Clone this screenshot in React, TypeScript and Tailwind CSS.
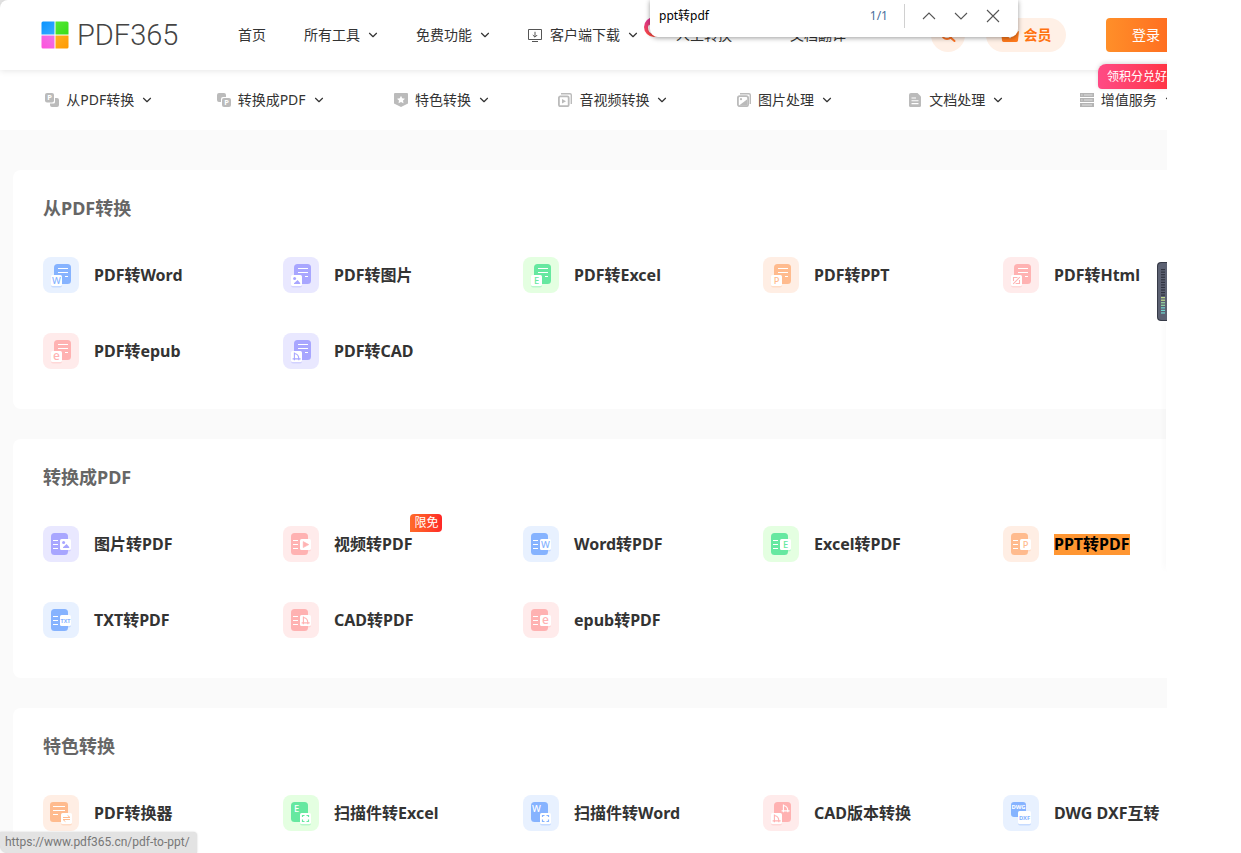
import type { ReactNode } from "react";
import { ChevronDown } from "lucide-react";

type Tone = "blue" | "purple" | "green" | "orange" | "red";
type Layout = "from" | "to" | "swap" | "scan" | "version" | "pair";

interface Tool {
  label: string;
  tone: Tone;
  layout: Layout;
  mark: string;
  tag?: string;
  found?: boolean;
}

const TONES: Record<Tone, { bg: string; fg: string }> = {
  blue: { bg: "#e8f1ff", fg: "#86b3ff" },
  purple: { bg: "#e9e8ff", fg: "#a8a6ff" },
  green: { bg: "#e4ffe1", fg: "#66e8a0" },
  orange: { bg: "#ffeee4", fg: "#ffbb8e" },
  red: { bg: "#ffebeb", fg: "#ffb2b2" },
};

const SECTIONS: { title: string; tools: Tool[] }[] = [
  {
    title: "从PDF转换",
    tools: [
      { label: "PDF转Word", tone: "blue", layout: "from", mark: "W" },
      { label: "PDF转图片", tone: "purple", layout: "from", mark: "image" },
      { label: "PDF转Excel", tone: "green", layout: "from", mark: "E" },
      { label: "PDF转PPT", tone: "orange", layout: "from", mark: "P" },
      { label: "PDF转Html", tone: "red", layout: "from", mark: "html" },
      { label: "PDF转epub", tone: "red", layout: "from", mark: "e" },
      { label: "PDF转CAD", tone: "purple", layout: "from", mark: "cad" },
    ],
  },
  {
    title: "转换成PDF",
    tools: [
      { label: "图片转PDF", tone: "purple", layout: "to", mark: "image" },
      { label: "视频转PDF", tone: "red", layout: "to", mark: "video", tag: "限免" },
      { label: "Word转PDF", tone: "blue", layout: "to", mark: "W" },
      { label: "Excel转PDF", tone: "green", layout: "to", mark: "E" },
      { label: "PPT转PDF", tone: "orange", layout: "to", mark: "P", found: true },
      { label: "TXT转PDF", tone: "blue", layout: "to", mark: "TXT" },
      { label: "CAD转PDF", tone: "red", layout: "to", mark: "cad" },
      { label: "epub转PDF", tone: "red", layout: "to", mark: "e" },
    ],
  },
  {
    title: "特色转换",
    tools: [
      { label: "PDF转换器", tone: "orange", layout: "swap", mark: "" },
      { label: "扫描件转Excel", tone: "green", layout: "scan", mark: "E" },
      { label: "扫描件转Word", tone: "blue", layout: "scan", mark: "W" },
      { label: "CAD版本转换", tone: "red", layout: "version", mark: "cad" },
      { label: "DWG DXF互转", tone: "blue", layout: "pair", mark: "" },
    ],
  },
];

/* Small sign drawn in an 11x11 box whose corner is at x, y. */
function Mark({ kind, x, y, color }: { kind: string; x: number; y: number; color: string }) {
  let body: ReactNode;
  if (kind === "image") {
    body = (
      <>
        <circle cx="3.6" cy="3.6" r="1.5" fill={color} />
        <path d="M3 9 V8.2 L6.6 5 L9.2 8 V9 Z" fill={color} />
      </>
    );
  } else if (kind === "video") {
    body = <path d="M3.2 2.6 L8.8 5.6 L3.2 8.6 Z" fill={color} stroke={color} strokeWidth="0.6" strokeLinejoin="round" />;
  } else if (kind === "cad") {
    body = (
      <path
        d="M3.4 1.5 V9.3 M1.6 7.9 H9.6 M3.4 2.7 H4.4 Q7.8 3.6 7.8 7.9 V9.3"
        fill="none"
        stroke={color}
        strokeWidth="1.1"
      />
    );
  } else if (kind === "html") {
    body = (
      <path
        d="M6.5 2.5 H2.5 V6 M8.5 5 V8.5 H4.6 M8.8 2.2 L2.2 8.8"
        fill="none"
        stroke={color}
        strokeWidth="1.1"
      />
    );
  } else if (kind === "TXT") {
    body = (
      <text x="5.5" y="7.8" fontSize="5.4" fontWeight="700" textAnchor="middle" fill={color}>
        TXT
      </text>
    );
  } else {
    body = (
      <text x="5.5" y="8.8" fontSize={kind === "e" ? "12" : "9.4"} fontWeight="500" textAnchor="middle" fill={color}>
        {kind}
      </text>
    );
  }
  return <g transform={`translate(${x} ${y})`}>{body}</g>;
}

function Plate({ x, y, size = 11, color }: { x: number; y: number; size?: number; color: string }) {
  return (
    <>
      <rect x={x} y={y + 1.4} width={size} height={size} rx="2" fill={color} opacity="0.35" />
      <rect x={x} y={y} width={size} height={size} rx="1.6" fill="#fff" />
    </>
  );
}

function ToolIcon({ tone, layout, mark }: { tone: Tone; layout: Layout; mark: string }) {
  const { bg, fg } = TONES[tone];
  const line = { fill: "none", stroke: "#fff", strokeWidth: 1.1 };
  return (
    <svg viewBox="0 0 36 36" className="size-9 shrink-0 font-['Noto_Sans',sans-serif]" aria-hidden="true">
      <rect width="36" height="36" rx="8" fill={bg} />
      {layout === "from" && (
        <>
          <rect x="11" y="7" width="17" height="20" rx="3.5" fill={fg} />
          <path d="M15 11.5 H25 M15 15.5 H25 M22 19.5 H25" {...line} />
          <Plate x={8} y={18} color={fg} />
          <Mark kind={mark} x={8} y={18} color={fg} />
        </>
      )}
      {layout === "to" && (
        <>
          <rect x="8" y="7" width="17" height="22" rx="3.5" fill={fg} />
          <path d="M10 14.5 H15 M10 18.5 H15 M10 22.5 H15" {...line} />
          <Plate x={17} y={13} color={fg} />
          <Mark kind={mark} x={17} y={13} color={fg} />
        </>
      )}
      {layout === "swap" && (
        <>
          <rect x="7" y="7" width="18" height="20" rx="3" fill={fg} />
          <path d="M10 11.5 H22 M10 15.5 H22 M10 19.5 H15" {...line} />
          <Plate x={18} y={18} color={fg} />
          <path d="M20 22.5 H27 L24.6 20.4 M27 24.5 H20 L22.4 26.6" fill="none" stroke={fg} strokeWidth="1" />
        </>
      )}
      {layout === "scan" && (
        <>
          <rect x="8" y="7" width="17" height="20" rx="3.5" fill={fg} />
          <Mark kind={mark} x={8} y={8} color="#fff" />
          <Plate x={17} y={18} color={fg} />
          <path
            d="M19.5 22 V20.5 H21.5 M23.5 20.5 H25.5 V22 M25.5 24.5 V26.5 H23.5 M21.5 26.5 H19.5 V24.5"
            fill="none"
            stroke={fg}
            strokeWidth="1.2"
          />
        </>
      )}
      {layout === "version" && (
        <>
          <rect x="11" y="7" width="17" height="20" rx="3.5" fill={fg} />
          <Mark kind={mark} x={17} y={8} color="#fff" />
          <Plate x={8} y={18} color={fg} />
          <Mark kind={mark} x={8} y={18} color={fg} />
        </>
      )}
      {layout === "pair" && (
        <>
          <rect x="8" y="7" width="15" height="15" rx="3" fill={fg} />
          <text x="15.5" y="14.4" fontSize="5.8" fontWeight="700" textAnchor="middle" fill="#fff">
            DWG
          </text>
          <Plate x={15} y={16} size={13} color={fg} />
          <text x="21.5" y="24.8" fontSize="5.8" fontWeight="700" textAnchor="middle" fill={fg}>
            DXF
          </text>
        </>
      )}
    </svg>
  );
}

const CATEGORIES: { label: string; icon: ReactNode }[] = [
  {
    label: "从PDF转换",
    icon: (
      <>
        <path d="M10 5 H12 A2 2 0 0 1 14 7 V12 A2 2 0 0 1 12 14 H7 A2 2 0 0 1 5 12 V10.5 H8.5 A1.5 1.5 0 0 0 10 9 Z" fill="#bbb" />
        <rect width="9" height="9.5" rx="2" fill="#bbb" />
        <text x="4.6" y="7.4" fontSize="7.5" fontWeight="700" textAnchor="middle" fill="#fff">P</text>
      </>
    ),
  },
  {
    label: "转换成PDF",
    icon: (
      <>
        <path d="M2 0 H7 A2 2 0 0 1 9 2 V4 H6 A2 2 0 0 0 4 6 V9 H2 A2 2 0 0 1 0 7 V2 A2 2 0 0 1 2 0 Z" fill="#bbb" />
        <rect x="5" y="5" width="9" height="9" rx="2" fill="#bbb" />
        <text x="9.6" y="12.2" fontSize="7.5" fontWeight="700" textAnchor="middle" fill="#fff">P</text>
      </>
    ),
  },
  {
    label: "特色转换",
    icon: (
      <>
        <path d="M1 0 H13 Q14 0 14 1 V10.5 L7 14 L0 10.5 V1 Q0 0 1 0 Z" fill="#bbb" />
        <path d="M7 2.8 L8.2 5.3 L11 5.7 L9 7.6 L9.5 10.3 L7 9 L4.5 10.3 L5 7.6 L3 5.7 L5.8 5.3 Z" fill="#fff" />
      </>
    ),
  },
  {
    label: "音视频转换",
    icon: (
      <>
        <path d="M3 0.7 H12 Q13.3 0.7 13.3 2 V11" fill="none" stroke="#bbb" strokeWidth="1.4" />
        <rect x="0.9" y="3.4" width="9.8" height="9.8" rx="1.4" fill="none" stroke="#bbb" strokeWidth="1.8" />
        <path d="M4 6 L8 8.3 L4 10.6 Z" fill="#bbb" />
      </>
    ),
  },
  {
    label: "图片处理",
    icon: (
      <>
        <path d="M3 0.7 H12 Q13.3 0.7 13.3 2 V11" fill="none" stroke="#bbb" strokeWidth="1.4" />
        <rect x="0.9" y="3.2" width="10.2" height="10" rx="1.8" fill="none" stroke="#bbb" strokeWidth="1.8" />
        <circle cx="4" cy="6.2" r="1.1" fill="#bbb" />
        <path d="M2 12.5 L10 6.5 V12.5 Z" fill="#bbb" />
      </>
    ),
  },
  {
    label: "文档处理",
    icon: (
      <>
        <path d="M3 0 H9.5 L13 3.5 V12.5 Q13 14 11.5 14 H2.5 Q1 14 1 12.5 V2 Q1 0 3 0 Z" fill="#bbb" />
        <path d="M3.5 5 H8 M3.5 7.8 H10.5 M3.5 10.6 H10.5" stroke="#fff" strokeWidth="1.1" />
      </>
    ),
  },
  {
    label: "增值服务",
    icon: (
      <>
        <path d="M0 0 H14 V4 H0 Z M0 5 H14 V9 H0 Z M0 10 H14 V14 H0 Z" fill="#b4b4b4" />
        <path d="M1.2 2 H2.5 M4 2 H12.5 M1.2 7 H2.5 M4 7 H12.5 M2 12 H12" stroke="#fff" strokeWidth="0.6" />
      </>
    ),
  },
];

function Caret() {
  return <ChevronDown className="-mx-0.5 size-3.5 text-[#333]" strokeWidth={2} aria-hidden="true" />;
}

function Logo() {
  return (
    <a href="#home" className="flex w-[139px] shrink-0 items-center gap-2" aria-label="PDF365">
      <svg viewBox="0 0 28 28" className="size-7 shrink-0" aria-hidden="true">
        <defs>
          <linearGradient id="lb" x1="0" y1="0" x2="1" y2="1"><stop stopColor="#0a94ff" /><stop offset="1" stopColor="#38aaff" /></linearGradient>
          <linearGradient id="lg" x1="1" y1="1" x2="0" y2="0"><stop stopColor="#38dc18" /><stop offset="1" stopColor="#55e835" /></linearGradient>
          <linearGradient id="lp" x1="0" y1="1" x2="1" y2="0"><stop stopColor="#ff50dc" /><stop offset="1" stopColor="#ee72e6" /></linearGradient>
          <linearGradient id="lo" x1="1" y1="1" x2="0" y2="0"><stop stopColor="#ff9a00" /><stop offset="1" stopColor="#ffae22" /></linearGradient>
        </defs>
        <path d="M2 0.5 H13.5 V13.5 H0.5 V2 Q0.5 0.5 2 0.5 Z" fill="url(#lb)" />
        <path d="M14.5 0.5 H26 Q27.5 0.5 27.5 2 V13.5 H14.5 Z" fill="url(#lg)" />
        <path d="M0.5 14.5 H13.5 V27.5 H2 Q0.5 27.5 0.5 26 Z" fill="url(#lp)" />
        <path d="M14.5 14.5 H27.5 V26 Q27.5 27.5 26 27.5 H14.5 Z" fill="url(#lo)" />
      </svg>
      <span className="font-['Roboto',sans-serif] text-[29px] leading-8 font-light text-[#444]">PDF365</span>
    </a>
  );
}

function Header() {
  return (
    <header className="relative z-10 flex h-[70px] items-center rounded-tl-lg bg-white pl-[41px] text-sm whitespace-nowrap text-[#333] shadow-[0_1px_6px_rgba(0,0,0,0.1)]">
      <Logo />
      <nav className="ml-[58px] flex shrink-0 items-center gap-[38px]">
        <a href="#index">首页</a>
        <a href="#tools" className="flex items-center gap-2">所有工具<Caret /></a>
        <a href="#free" className="flex items-center gap-2">免费功能<Caret /></a>
        <a href="#client" className="relative flex items-center gap-2">
          <svg viewBox="0 0 14 13" className="h-[13px] w-3.5" fill="none" stroke="#555" aria-hidden="true">
            <path d="M0.5 0.5 H13.5 V10.5 H0.5 Z M4 12.5 H10 M7 2.8 V8 M4.8 6 L7 8.2 L9.2 6" />
          </svg>
          客户端下载
          <Caret />
          <svg viewBox="0 0 20 20" className="absolute -top-2 left-full ml-1.5 size-5" aria-hidden="true">
            <defs>
              <linearGradient id="hot" x1="0" y1="0" x2="0" y2="1"><stop stopColor="#d9329c" /><stop offset="1" stopColor="#ff4a3c" /></linearGradient>
            </defs>
            <circle cx="10" cy="10" r="10" fill="url(#hot)" />
            <path d="M4 10 L5 7.5 L6.5 9 Q8 6 9 3 Q15 6 15 11 Q15 17 10 17 Q4 17 4 10 Z" fill="#fff" />
          </svg>
        </a>
        <a href="#manual">人工转换</a>
        <a href="#translate" className="ml-5">文档翻译</a>
      </nav>
      <button type="button" aria-label="搜索" className="ml-[85px] flex size-[34px] shrink-0 items-center justify-center rounded-full bg-[#fff0e6]">
        <svg viewBox="0 0 16 16" className="size-4" fill="none" stroke="#ff7424" strokeWidth="2" aria-hidden="true">
          <circle cx="7" cy="7" r="5" />
          <path d="M10.5 10.5 L14.5 14" strokeLinecap="round" />
        </svg>
      </button>
      <a href="#vip" className="ml-[21px] flex h-[34px] w-20 shrink-0 items-center justify-center gap-[5px] rounded-full bg-[#fff0e6] font-bold text-[#ff7210]">
        <svg viewBox="0 0 18 14" className="h-3.5 w-[18px]" aria-hidden="true">
          <path d="M0 3 L5 5 L9 0 L13 5 L18 3 L17 12.5 Q16.7 14 15 14 H3 Q1.3 14 1 12.5 Z" fill="#ff7a1c" />
          <path d="M6 6.5 L9 9.5 L12 6.5" fill="none" stroke="#fff0e6" strokeWidth="1.5" />
        </svg>
        会员
      </a>
      <div className="relative ml-10 shrink-0">
        <button type="button" className="h-[34px] w-20 rounded bg-linear-to-r from-[#ff8f29] to-[#ff641e] text-sm text-white">
          登录
        </button>
        <a href="#points" className="absolute top-[46px] -left-2 flex h-[25px] w-[86px] items-center rounded-t-lg rounded-br-lg rounded-bl bg-linear-to-r from-[#ff4a85] to-[#ff2d2d] pl-[9px] text-xs text-white shadow-[0_-1px_4px_rgba(0,0,0,0.15)]">
          领积分兑好
        </a>
      </div>
    </header>
  );
}

function CategoryBar() {
  return (
    <nav className="bg-white pl-[13px]">
      <ul className="grid h-[60px] w-[1200px] grid-cols-7 text-sm text-[#333]">
        {CATEGORIES.map(({ label, icon }) => (
          <li key={label} className="flex items-center justify-center">
            <a href="#category" className="flex items-center gap-2 whitespace-nowrap">
              <span className="flex items-center gap-[7px]">
                <svg viewBox="0 0 14 14" className="size-3.5" aria-hidden="true">{icon}</svg>
                {label}
              </span>
              <Caret />
            </a>
          </li>
        ))}
      </ul>
    </nav>
  );
}

function ToolCard({ title, tools }: { title: string; tools: Tool[] }) {
  return (
    <section className="rounded-lg bg-white pt-6 pb-10 pl-[30px]">
      <h2 className="text-lg leading-7 font-bold text-[#666]">{title}</h2>
      <ul className="mt-[35px] grid grid-cols-[repeat(5,240px)] gap-y-10">
        {tools.map((tool) => (
          <li key={tool.label}>
            <a href="#tool" className="flex h-9 items-center gap-[15px] text-base font-bold whitespace-nowrap text-[#333]">
              <ToolIcon tone={tool.tone} layout={tool.layout} mark={tool.mark} />
              <span className="relative leading-[21px]">
                {tool.found ? <mark className="block bg-[#ff9632] text-black">{tool.label}</mark> : tool.label}
                {tool.tag && (
                  <span className="absolute -top-5 left-full -ml-0.5 rounded-t rounded-br bg-linear-to-r from-[#ff6a2b] to-[#ff2626] px-1 text-xs leading-[18px] font-normal text-white">
                    {tool.tag}
                  </span>
                )}
              </span>
            </a>
          </li>
        ))}
      </ul>
    </section>
  );
}

function FindBar() {
  return (
    <form className="absolute top-0 left-[650px] z-30 flex h-[37px] w-[368px] items-center rounded-b-lg bg-white pr-[9px] pb-[5px] pl-[9px] text-xs shadow-[0_1px_5px_rgba(0,0,0,0.4)]">
      <input aria-label="查找" defaultValue="ppt转pdf" className="min-w-0 flex-1 text-xs text-black outline-none" />
      <span className="text-[#4a6f9c]">1/1</span>
      <span className="mx-4 h-6 w-px bg-[#d0d0d0]" />
      {[
        ["上一个", "M2 11 L8 5 L14 11"],
        ["下一个", "M2 5 L8 11 L14 5"],
        ["关闭", "M2 2 L14 14 M14 2 L2 14"],
      ].map(([name, path]) => (
        <button key={name} type="button" aria-label={name} className="flex h-8 w-8 items-center justify-center first-of-type:-ml-2">
          <svg viewBox="0 0 16 16" className="size-4" fill="none" stroke="#555" strokeWidth="1.1" aria-hidden="true">
            <path d={path} />
          </svg>
        </button>
      ))}
    </form>
  );
}

function SideMeter() {
  const bars = Array.from({ length: 18 }, (_, i) => i);
  return (
    <div className="absolute top-[262px] right-0 z-20">
      <svg viewBox="0 0 10 59" className="h-[59px] w-2.5" aria-hidden="true">
        <path d="M10 0 H4 Q0 0 0 4 V55 Q0 59 4 59 H10 Z" fill="#363a47" />
        <path d="M10 1 H4.5 Q1 1 1 4.5 V54.5 Q1 58 4.5 58 H10 Z" fill="#5c6172" />
        {bars.map((i) => (
          <rect
            key={i}
            x="4"
            y={7 + i * 2.55}
            width="4"
            height="1.2"
            fill={i < 11 ? "#30333f" : i < 13 ? "#c4e08c" : i < 15 ? "#98dca4" : "#70d8d0"}
          />
        ))}
      </svg>
      <div className="ml-auto h-[248px] w-px bg-white shadow-[0_0_6px_rgba(0,0,0,0.14)]" />
    </div>
  );
}

export default function App() {
  return (
    <div className="relative h-screen overflow-hidden bg-white pr-[74px] font-['Noto_Sans','Noto_Sans_CJK_SC',sans-serif]">
      <div className="relative h-full overflow-hidden bg-[#fafafa]">
        <div className="bg-[#e4e4e4]">
          <Header />
        </div>
        <CategoryBar />
        <main className="flex w-[1213px] flex-col gap-[30px] pt-10 pl-[13px]">
          {SECTIONS.map((section) => (
            <ToolCard key={section.title} {...section} />
          ))}
        </main>
        <SideMeter />
      </div>
      <FindBar />
      <div className="absolute bottom-0 left-0 z-30 rounded-tr rounded-bl-lg bg-[#e3e3e3] pr-[7px] pl-[5px] font-['Roboto',sans-serif] text-xs leading-[21px] text-[#777] shadow-[0_0_2px_rgba(0,0,0,0.2)]">
        https://www.pdf365.cn/pdf-to-ppt/
      </div>
    </div>
  );
}
